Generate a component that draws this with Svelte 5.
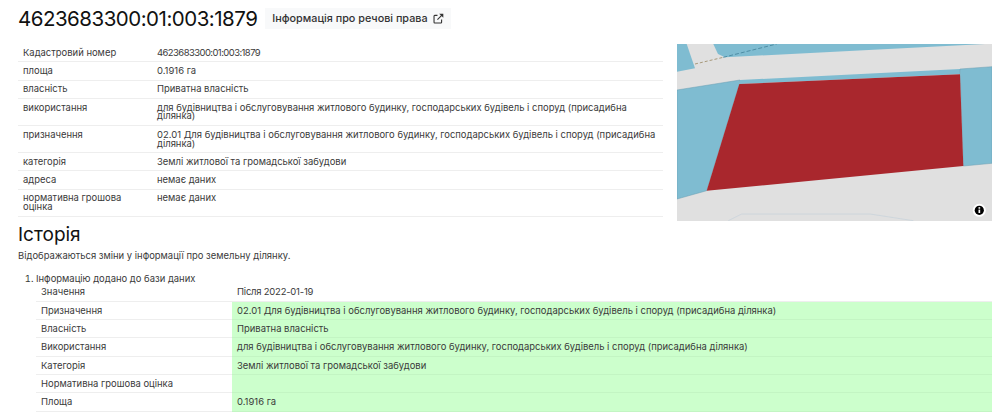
<script>
    const info = [
        ["Кадастровий номер", "4623683300:01:003:1879"],
        ["площа", "0.1916 га"],
        ["власність", "Приватна власність"],
        ["використання", "для будівництва і обслуговування житлового будинку, господарських будівель і споруд (присадибна ділянка)"],
        ["призначення", "02.01 Для будівництва і обслуговування житлового будинку, господарських будівель і споруд (присадибна ділянка)"],
        ["категорія", "Землі житлової та громадської забудови"],
        ["адреса", "немає даних"],
        ["нормативна грошова оцінка", "немає даних"]
    ];

    const history = [
        ["Призначення", "02.01 Для будівництва і обслуговування житлового будинку, господарських будівель і споруд (присадибна ділянка)"],
        ["Власність", "Приватна власність"],
        ["Використання", "для будівництва і обслуговування житлового будинку, господарських будівель і споруд (присадибна ділянка)"],
        ["Категорія", "Землі житлової та громадської забудови"],
        ["Нормативна грошова оцінка", ""],
        ["Площа", "0.1916 га"]
    ];
</script>

<div class="page">
    <header class="head">
        <h1>4623683300:01:003:1879</h1>
        <button class="rights">
            Інформація про речові права
            <svg width="11" height="11" viewBox="0 0 16 16" fill="none" stroke="#333" stroke-width="1.6">
                <path d="M12.5 9.5v4a1 1 0 0 1-1 1h-9a1 1 0 0 1-1-1v-9a1 1 0 0 1 1-1h4" />
                <path d="M6.5 9.5 14 2" />
                <path d="M9 1h6v6z" fill="#333" stroke="none" />
            </svg>
        </button>
    </header>

    <section class="top">
        <table class="info">
            <tbody>
                {#each info as row, i}
                    <tr>
                        <td class="key">{row[0]}</td>
                        <td class:digits={i === 0}>{row[1]}</td>
                    </tr>
                {/each}
            </tbody>
        </table>

        <div class="map">
            <svg width="315" height="177" viewBox="0 0 315 177">
                <rect width="315" height="177" fill="#e0e0e0" />
                <polygon points="0,0 9.7,0 18,24.3 0,27.7" fill="#7fbcd1" />
                <polygon points="36.3,0 308,0 48,13.3 41,10" fill="#7fbcd1" />
                <polygon points="0,46 63,36 62.3,40 29.7,146.7 0,155" fill="#7fbcd1" stroke="#6a9fb2" stroke-width="0.5" />
                <polygon points="63,36 283,25 283,30.3 62.3,40" fill="#7fbcd1" />
                <polygon points="283,25 315,22.7 315,119.3 286.3,122" fill="#7fbcd1" stroke="#6a9fb2" stroke-width="0.5" />
                <polygon points="62.3,40 283,30.3 286.3,122 29.7,146.7" fill="#a9272d" />
                <path d="M18 20 46.3 13.3" stroke="#a89a7c" stroke-width="1" stroke-dasharray="3 2" />
                <path d="M46.3 13.3 99.7 0" stroke="#4f8ea5" stroke-width="1" stroke-dasharray="4 2" />
                <path d="M51.3 176.7 64.7 170H193L236.3 176.7" fill="none" stroke="#c9d3da" stroke-width="0.8" />
                <circle cx="302.3" cy="166.3" r="6.5" fill="#fff" />
                <circle cx="302.3" cy="166.3" r="4.6" fill="#000" />
                <rect x="301.5" y="165.6" width="1.7" height="3.4" fill="#fff" />
                <rect x="301.5" y="163.2" width="1.7" height="1.5" fill="#fff" />
            </svg>
        </div>
    </section>

    <h2>Історія</h2>
    <p class="lead">Відображаються зміни у інформації про земельну ділянку.</p>

    <ol>
        <li>
            Інформацію додано до бази даних
            <table class="changes">
                <thead>
                    <tr>
                        <td class="name">Значення</td>
                        <td class="date">Після 2022-01-19</td>
                    </tr>
                </thead>
                <tbody>
                    {#each history as row}
                        <tr>
                            <td class="name">{row[0]}</td>
                            <td class="added">{row[1]}</td>
                        </tr>
                    {/each}
                </tbody>
            </table>
        </li>
    </ol>
</div>

<style>
    :global(body) {
        margin: 0;
        background: #fff;
        overflow: hidden;
    }

    .page {
        padding: 0 8px 0 18px;
        font-family: Inter, "Liberation Sans", sans-serif;
        font-size: 9.45px;
        line-height: 8.8px;
        color: #3a3a3a;
    }

    .head {
        display: flex;
        align-items: center;
        height: 37px;
        gap: 8px;
    }

    h1 {
        margin: 0;
        font-size: 20.5px;
        line-height: 24px;
        font-weight: 400;
        letter-spacing: -0.5px;
        color: #111;
        white-space: nowrap;
    }

    .rights {
        display: flex;
        align-items: center;
        gap: 5px;
        height: 21px;
        padding: 0 7px;
        border: 0;
        background: #f8f9fa;
        font: 500 10.8px Inter, sans-serif;
        color: #333;
    }

    .top {
        display: grid;
        grid-template-columns: 645px 315px;
        column-gap: 14px;
        margin-top: 7px;
    }

    table {
        border-collapse: collapse;
        width: 100%;
    }

    .info {
        align-self: start;
    }

    td {
        padding: 4.75px 5px 3.75px;
        vertical-align: top;
        border-bottom: 1px solid #eee;
    }

    .key {
        width: 124px;
    }

    .digits {
        letter-spacing: -0.55px;
    }

    .date {
        letter-spacing: -0.2px;
    }

    .map {
        height: 177px;
    }

    .map svg {
        display: block;
    }

    h2 {
        margin: 2px 0 0;
        font-size: 19px;
        line-height: 24px;
        font-weight: 400;
        color: #111;
    }

    .lead {
        margin: 5px 0 0;
    }

    ol {
        margin: 14px 0 0;
        padding: 0 0 0 18px;
    }

    .name {
        width: 186px;
    }

    .added {
        background: #ccffcc;
        border-bottom-color: #c3f5c3;
    }
</style>
